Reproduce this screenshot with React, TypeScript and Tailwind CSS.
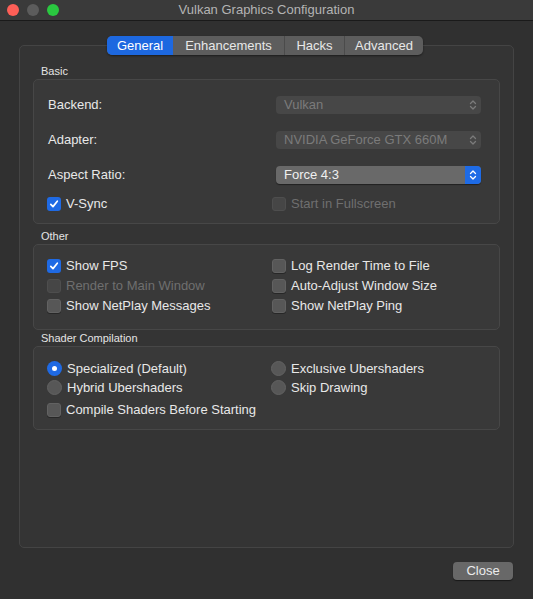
import type { ReactNode } from "react";

function Chevrons({ color }: { color: string }) {
  return (
    <svg width="8" height="12" viewBox="0 0 8 12" fill="none">
      <path d="M1.5 4.5 L4 2 L6.5 4.5" stroke={color} strokeWidth="1.3" strokeLinecap="round" strokeLinejoin="round" />
      <path d="M1.5 7.5 L4 10 L6.5 7.5" stroke={color} strokeWidth="1.3" strokeLinecap="round" strokeLinejoin="round" />
    </svg>
  );
}

function Popup({ text, disabled }: { text: string; disabled?: boolean }) {
  if (disabled) {
    return (
      <div className="flex-1 h-[18px] rounded-[4px] bg-[#474747] flex items-center">
        <span className="flex-1 pl-[8px] text-[13px] leading-[18px] text-[#7b7b7b]">{text}</span>
        <span className="w-[16px] flex items-center justify-center">
          <Chevrons color="#7b7b7b" />
        </span>
      </div>
    );
  }
  return (
    <div className="flex-1 h-[18px] rounded-[4px] bg-[#696969] flex items-center overflow-hidden shadow-[0_1px_1px_rgba(0,0,0,0.45)]">
      <span className="flex-1 pl-[8px] text-[13px] leading-[18px] text-[#f0f0f0]">{text}</span>
      <span className="w-[16px] h-full bg-[#1e6be6] flex items-center justify-center">
        <Chevrons color="#ffffff" />
      </span>
    </div>
  );
}

function Checkbox({ label, checked, disabled }: { label: string; checked?: boolean; disabled?: boolean }) {
  return (
    <div className="flex items-center h-[14px]">
      {checked ? (
        <span className="w-[14px] h-[14px] rounded-[3px] bg-[#1f6ae4] flex items-center justify-center">
          <svg width="10" height="10" viewBox="0 0 10 10" fill="none">
            <path d="M1.8 5.3 L4 7.6 L8.3 2.2" stroke="#ffffff" strokeWidth="1.7" strokeLinecap="round" strokeLinejoin="round" />
          </svg>
        </span>
      ) : (
        <span
          className={
            disabled
              ? "w-[14px] h-[14px] rounded-[3px] bg-[#464646] border border-[#4e4e4e]"
              : "w-[14px] h-[14px] rounded-[3px] bg-[#575757] border border-[#626262] shadow-[0_1px_0_rgba(0,0,0,0.3)]"
          }
        />
      )}
      <span className={"ml-[5px] text-[13px] leading-[14px] " + (disabled ? "text-[#6f6f6f]" : "text-[#e8e8e8]")}>
        {label}
      </span>
    </div>
  );
}

function Radio({ label, checked }: { label: string; checked?: boolean }) {
  return (
    <div className="flex items-center h-[15px]">
      {checked ? (
        <span className="w-[15px] h-[15px] rounded-full bg-[#1f6ae4] flex items-center justify-center">
          <span className="w-[5px] h-[5px] rounded-full bg-white" />
        </span>
      ) : (
        <span className="w-[15px] h-[15px] rounded-full bg-[#575757] border border-[#626262]" />
      )}
      <span className="ml-[5px] text-[13px] leading-[15px] text-[#e8e8e8]">{label}</span>
    </div>
  );
}

function Group({ title, className, children }: { title: string; className: string; children: ReactNode }) {
  return (
    <div className={className}>
      <div className="pl-[8px] text-[11px] leading-[14px] text-[#e4e4e4]">{title}</div>
      <div className="mt-[1px] rounded-[5px] border border-[#474747] bg-[#393939]">{children}</div>
    </div>
  );
}

const tabs = [
  { name: "General", w: "w-[66px]" },
  { name: "Enhancements", w: "w-[111px]" },
  { name: "Hacks", w: "w-[60px]" },
  { name: "Advanced", w: "w-[79px]" },
];

export default function App() {
  return (
    <div className="w-[533px] h-[599px] bg-[#303030] font-['Liberation_Sans',Arial,sans-serif] text-[#e8e8e8] flex flex-col overflow-hidden">
      {/* title bar */}
      <div className="h-[21px] bg-[#3a3a3a] border-b border-[#1a1a1a] flex items-center relative">
        <div className="flex gap-[8px] pl-[7px]">
          <span className="w-[12px] h-[12px] rounded-full bg-[#fe5f57]" />
          <span className="w-[12px] h-[12px] rounded-full bg-[#5c5c5c]" />
          <span className="w-[12px] h-[12px] rounded-full bg-[#2ac840]" />
        </div>
        <div className="absolute inset-0 flex items-center justify-center text-[13px] text-[#b4b4b4]">
          Vulkan Graphics Configuration
        </div>
      </div>

      {/* tabs */}
      <div className="flex justify-center mt-[15px] relative z-10 pr-[3px]">
        <div className="flex h-[19px] rounded-[5px] bg-[#5d5d5d] overflow-hidden shadow-[0_1px_2px_rgba(0,0,0,0.45)] text-[13px]">
          {tabs.map((t, i) => (
            <div
              key={t.name}
              className={
                t.w +
                " flex items-center justify-center leading-[19px] " +
                (i === 0
                  ? "bg-[#1d68e0] text-white"
                  : "text-[#e8e8e8] " + (i > 1 ? "border-l border-[#4b4b4b]" : ""))
              }
            >
              {t.name}
            </div>
          ))}
        </div>
      </div>

      {/* tab panel */}
      <div className="-mt-[10px] mx-[19px] h-[503px] rounded-[5px] border border-[#444444] bg-[#343434] px-[13px] pt-[18px]">
        <Group title="Basic" className="">
          <div className="pl-[13px] pr-[18px] pt-[16px] pb-[12px] flex flex-col">
            <div className="flex items-center h-[18px]">
              <span className="w-[229px] pl-[1px] text-[13px]">Backend:</span>
              <Popup text="Vulkan" disabled />
            </div>
            <div className="flex items-center h-[18px] mt-[17px]">
              <span className="w-[229px] pl-[1px] text-[13px]">Adapter:</span>
              <Popup text="NVIDIA GeForce GTX 660M" disabled />
            </div>
            <div className="flex items-center h-[18px] mt-[17px]">
              <span className="w-[229px] pl-[1px] text-[13px]">Aspect Ratio:</span>
              <Popup text="Force 4:3" />
            </div>
            <div className="grid grid-cols-[225px_1fr] mt-[13px]">
              <Checkbox label="V-Sync" checked />
              <Checkbox label="Start in Fullscreen" disabled />
            </div>
          </div>
        </Group>

        <Group title="Other" className="mt-[5px]">
          <div className="grid grid-cols-[225px_1fr] gap-y-[6px] pl-[13px] pt-[14px] pb-[16px]">
            <Checkbox label="Show FPS" checked />
            <Checkbox label="Log Render Time to File" />
            <Checkbox label="Render to Main Window" disabled />
            <Checkbox label="Auto-Adjust Window Size" />
            <Checkbox label="Show NetPlay Messages" />
            <Checkbox label="Show NetPlay Ping" />
          </div>
        </Group>

        <Group title="Shader Compilation" className="mt-[1px]">
          <div className="pl-[13px] pt-[14px] pb-[12px]">
            <div className="grid grid-cols-[224px_1fr] gap-y-[4px]">
              <Radio label="Specialized (Default)" checked />
              <Radio label="Exclusive Ubershaders" />
              <Radio label="Hybrid Ubershaders" />
              <Radio label="Skip Drawing" />
            </div>
            <div className="mt-[8px]">
              <Checkbox label="Compile Shaders Before Starting" />
            </div>
          </div>
        </Group>
      </div>

      {/* footer */}
      <div className="flex justify-end pr-[20px] mt-[14px]">
        <button className="w-[60px] h-[18px] rounded-[4px] bg-[#686868] text-[13px] leading-[18px] text-[#ececec] shadow-[0_1px_1px_rgba(0,0,0,0.5)]">
          Close
        </button>
      </div>
    </div>
  );
}
